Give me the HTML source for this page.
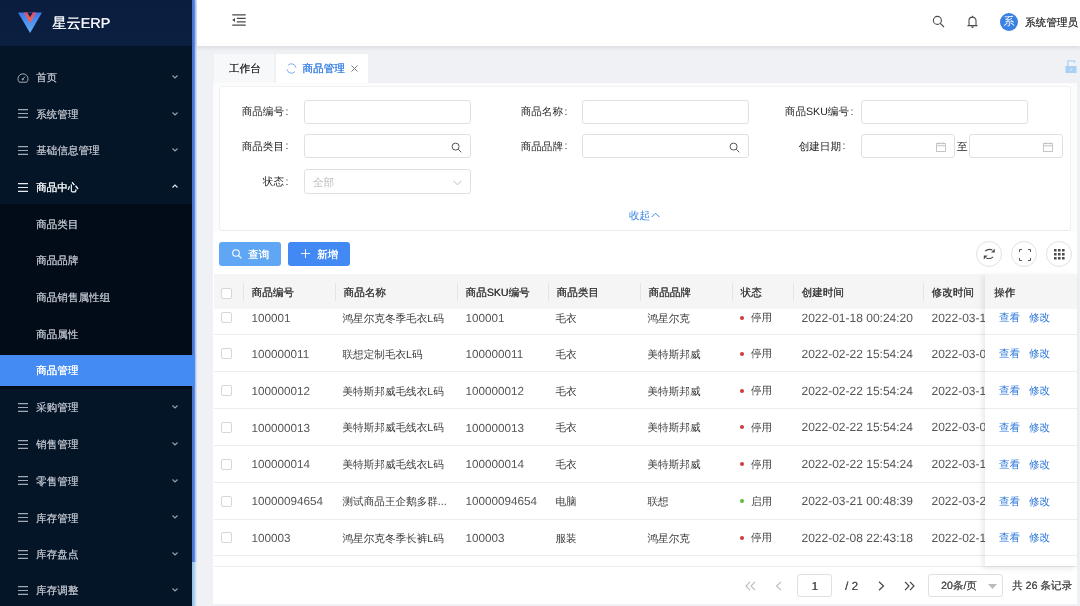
<!DOCTYPE html><html><head><meta charset="utf-8"><title>星云ERP</title><style>
*{box-sizing:border-box;margin:0;padding:0}
html,body{width:1080px;height:606px;overflow:hidden}
body{position:relative;background:#eff1f4;font-family:"Liberation Sans",sans-serif;font-size:10.6px;color:#333;text-rendering:geometricPrecision}
#root{position:absolute;left:0;top:0;width:1080px;height:606px;will-change:transform;overflow:hidden}
.a{position:absolute;white-space:nowrap}
#side{left:0;top:0;width:192px;height:606px;background:#051528;overflow:hidden}
#logo{left:0;top:0;width:192px;height:46px;background:linear-gradient(180deg,#0a1d3e,#0b1f41)}
.lt{left:52px;top:15.5px;font-size:14.3px;color:#f4f6fa;text-shadow:0.45px 0 0 #f4f6fa;line-height:16px}
.mt{left:36px;line-height:12px;color:#bcc1c9;text-shadow:0.15px 0 0 currentColor}
#sub{left:0;top:204px;width:192px;height:185px;background:#020c18}
#hl{left:0;top:355px;width:192px;height:31px;background:#448bf4}
#strip{left:192px;top:0;width:5px;height:562px;background:linear-gradient(90deg,#4274d3 0,#4a7cd9 45%,#a9b9ec 62%,#c3cbef 78%,#e8ebf3 100%)}
#hl2{left:192px;top:355px;width:2.5px;height:31px;background:#448bf4}
#strip2{left:192px;top:562px;width:5px;height:44px;background:linear-gradient(90deg,#8fbde6 0,#a9d0ee 45%,#dfe6ee 80%,#eceef2 100%)}
#hdr{left:197px;top:0;width:883px;height:46px;background:#fff;box-shadow:0 2px 4px rgba(0,0,0,.09)}
.hn{left:1025px;top:16.5px;line-height:12px;color:#3a3a3a;text-shadow:0.2px 0 0 #3a3a3a}
.tab1{left:214px;top:54px;width:60px;height:30px;background:#f7f8fa}
.tab2{left:276px;top:54px;width:92px;height:30px;background:#fff}
.tt{line-height:12px;text-shadow:0.1px 0 0 currentColor}
#outer{left:213px;top:83px;width:864px;height:148px;background:#fcfcfd}
#card{left:219px;top:86px;width:852px;height:145px;background:#fff;border:1px solid #f0f1f3;border-bottom-color:#ebebeb;border-radius:3px}
#tbw{left:213px;top:231px;width:864px;height:373px;background:#fff}
.lb{line-height:12px;color:#1f1f1f;text-align:right}
.inp{background:#fff;border:1px solid #e0e0e0;border-radius:3px;height:24.3px}
.btn{height:24px;border-radius:3px;color:#fff;line-height:12px}
.circ{width:26px;height:26px;border:1px solid #e2e2e2;border-radius:50%;background:#fff}
#thead{left:214px;top:274px;width:863px;height:35px;background:#f5f5f5}
.th{line-height:12px;color:#3a3a3a;text-shadow:0.3px 0 0 #3a3a3a;top:287px}
.sep{width:1px;height:18px;top:283px;background:#e4e4e4}
.rl{left:214px;width:863px;height:1px;background:#ececec}
.td{line-height:12px;color:#3c3c3c}
.num{font-size:11.7px;color:#555}
.dt{font-size:12px}
.cb{width:11px;height:11px;border:1px solid #d6d6d6;border-radius:2px;background:#fff}
.lnk{color:#2f78da;line-height:12px}
#fixed{left:985px;top:274px;width:92px;height:292px;background:#fff;box-shadow:-2px 2px 6px rgba(0,0,0,.10)}
.pg{line-height:12px;color:#505050;text-shadow:0.2px 0 0 #505050}
</style></head><body><div id="root"><div id="side" class="a"><div id="logo" class="a"><svg class="a" style="left:17.7px;top:12px" width="24" height="22" viewBox="0 0 24 22"><defs><linearGradient id="vg" x1="0" y1="0" x2="0" y2="1"><stop offset="0" stop-color="#3f76e6"/><stop offset="1" stop-color="#62b2f7"/></linearGradient><linearGradient id="rg" x1="0" y1="0" x2="0" y2="1"><stop offset="0" stop-color="#e0506a"/><stop offset="1" stop-color="#ef6a4e"/></linearGradient></defs><polygon points="0,0.5 24,0.5 12.1,21" fill="url(#vg)"/><polygon points="5.8,0.5 18.2,0.5 12.1,11" fill="url(#rg)"/><polygon points="9.3,0.5 14.8,0.5 12.1,5.3" fill="#0b1d42"/></svg><div class="a lt">星云ERP</div></div><div id="sub" class="a"></div><div id="hl" class="a"></div><div class="a mt" style="top:72.0px;color:#b7bcc5">首页</div><svg class="a" style="left:17px;top:71.5px" width="12" height="11" viewBox="0 0 12 11" fill="none" stroke="#a4aab3" stroke-width="1"><path d="M2.3 10.2A5 5 0 1 1 9.7 10.2Z"/><path d="M5.8 7.2L8 4.6"/><circle cx="5.7" cy="7.3" r="0.6" fill="#a4aab3"/></svg><svg class="a" style="left:171.5px;top:74.8px" width="6" height="4" viewBox="0 0 6 4" fill="none" stroke="#9aa0aa" stroke-width="1.1"><path d="M0.5 0.5L3 3L5.5 0.5"/></svg><div class="a mt" style="top:108.7px;color:#b7bcc5">系统管理</div><svg class="a" style="left:18px;top:109.2px" width="10" height="9" viewBox="0 0 10 9" stroke="#a4aab3" stroke-width="1.15"><path d="M0 0.6H10M0 4.5H10M0 8.4H10"/></svg><svg class="a" style="left:171.5px;top:111.5px" width="6" height="4" viewBox="0 0 6 4" fill="none" stroke="#9aa0aa" stroke-width="1.1"><path d="M0.5 0.5L3 3L5.5 0.5"/></svg><div class="a mt" style="top:145.4px;color:#b7bcc5">基础信息管理</div><svg class="a" style="left:18px;top:145.9px" width="10" height="9" viewBox="0 0 10 9" stroke="#a4aab3" stroke-width="1.15"><path d="M0 0.6H10M0 4.5H10M0 8.4H10"/></svg><svg class="a" style="left:171.5px;top:148.2px" width="6" height="4" viewBox="0 0 6 4" fill="none" stroke="#9aa0aa" stroke-width="1.1"><path d="M0.5 0.5L3 3L5.5 0.5"/></svg><div class="a mt" style="top:182.2px;color:#f2f4f7">商品中心</div><svg class="a" style="left:18px;top:182.7px" width="10" height="9" viewBox="0 0 10 9" stroke="#e8ebf0" stroke-width="1.15"><path d="M0 0.6H10M0 4.5H10M0 8.4H10"/></svg><svg class="a" style="left:171.5px;top:184.2px" width="6" height="4" viewBox="0 0 6 4" fill="none" stroke="#e8ebf0" stroke-width="1.1"><path d="M0.5 3.5L3 1L5.5 3.5"/></svg><div class="a mt" style="top:402.4px;color:#b7bcc5">采购管理</div><svg class="a" style="left:18px;top:402.9px" width="10" height="9" viewBox="0 0 10 9" stroke="#a4aab3" stroke-width="1.15"><path d="M0 0.6H10M0 4.5H10M0 8.4H10"/></svg><svg class="a" style="left:171.5px;top:405.2px" width="6" height="4" viewBox="0 0 6 4" fill="none" stroke="#9aa0aa" stroke-width="1.1"><path d="M0.5 0.5L3 3L5.5 0.5"/></svg><div class="a mt" style="top:439.2px;color:#b7bcc5">销售管理</div><svg class="a" style="left:18px;top:439.7px" width="10" height="9" viewBox="0 0 10 9" stroke="#a4aab3" stroke-width="1.15"><path d="M0 0.6H10M0 4.5H10M0 8.4H10"/></svg><svg class="a" style="left:171.5px;top:442.0px" width="6" height="4" viewBox="0 0 6 4" fill="none" stroke="#9aa0aa" stroke-width="1.1"><path d="M0.5 0.5L3 3L5.5 0.5"/></svg><div class="a mt" style="top:475.9px;color:#b7bcc5">零售管理</div><svg class="a" style="left:18px;top:476.4px" width="10" height="9" viewBox="0 0 10 9" stroke="#a4aab3" stroke-width="1.15"><path d="M0 0.6H10M0 4.5H10M0 8.4H10"/></svg><svg class="a" style="left:171.5px;top:478.7px" width="6" height="4" viewBox="0 0 6 4" fill="none" stroke="#9aa0aa" stroke-width="1.1"><path d="M0.5 0.5L3 3L5.5 0.5"/></svg><div class="a mt" style="top:512.6px;color:#b7bcc5">库存管理</div><svg class="a" style="left:18px;top:513.1px" width="10" height="9" viewBox="0 0 10 9" stroke="#a4aab3" stroke-width="1.15"><path d="M0 0.6H10M0 4.5H10M0 8.4H10"/></svg><svg class="a" style="left:171.5px;top:515.4px" width="6" height="4" viewBox="0 0 6 4" fill="none" stroke="#9aa0aa" stroke-width="1.1"><path d="M0.5 0.5L3 3L5.5 0.5"/></svg><div class="a mt" style="top:549.3px;color:#b7bcc5">库存盘点</div><svg class="a" style="left:18px;top:549.8px" width="10" height="9" viewBox="0 0 10 9" stroke="#a4aab3" stroke-width="1.15"><path d="M0 0.6H10M0 4.5H10M0 8.4H10"/></svg><svg class="a" style="left:171.5px;top:552.1px" width="6" height="4" viewBox="0 0 6 4" fill="none" stroke="#9aa0aa" stroke-width="1.1"><path d="M0.5 0.5L3 3L5.5 0.5"/></svg><div class="a mt" style="top:585.3px;color:#b7bcc5">库存调整</div><svg class="a" style="left:18px;top:585.8px" width="10" height="9" viewBox="0 0 10 9" stroke="#a4aab3" stroke-width="1.15"><path d="M0 0.6H10M0 4.5H10M0 8.4H10"/></svg><svg class="a" style="left:171.5px;top:588.1px" width="6" height="4" viewBox="0 0 6 4" fill="none" stroke="#9aa0aa" stroke-width="1.1"><path d="M0.5 0.5L3 3L5.5 0.5"/></svg><div class="a mt" style="top:218.5px;color:#b7bcc5">商品类目</div><div class="a mt" style="top:255.2px;color:#b7bcc5">商品品牌</div><div class="a mt" style="top:291.9px;color:#b7bcc5">商品销售属性组</div><div class="a mt" style="top:328.6px;color:#b7bcc5">商品属性</div><div class="a mt" style="top:365.3px;color:#ffffff">商品管理</div></div><div id="strip" class="a"></div><div id="strip2" class="a"></div><div id="hl2" class="a"></div><div id="hdr" class="a"></div><svg class="a" style="left:232px;top:14px" width="14" height="12" viewBox="0 0 14 12" stroke="#4a4a4a" stroke-width="1.3"><path d="M0.3 0.8H13.7M4.8 4.4H13.7M4.8 7.8H13.7M0.3 11.2H13.7"/><path d="M0.2 6.1L3 4.1V8.1Z" fill="#4a4a4a" stroke="none"/></svg><svg class="a" style="left:932px;top:15px" width="13" height="13" viewBox="0 0 13 13" fill="none" stroke="#4a4a4a" stroke-width="1.1"><circle cx="5.4" cy="5.4" r="4"/><path d="M8.3 8.3L12 12"/></svg><svg class="a" style="left:967px;top:15px" width="11" height="13" viewBox="0 0 11 13" fill="none" stroke="#4a4a4a" stroke-width="1.1"><path d="M2 10.6V5.6A3.5 3.5 0 0 1 9 5.6V10.6M0.5 10.6H10.5"/><path d="M5.5 2.1V0.8M4.4 11.6L5.5 12.5L6.6 11.6"/></svg><div class="a" style="left:1000px;top:13px;width:18px;height:18px;border-radius:50%;background:#3b80e3;color:#fff;font-size:11px;line-height:18px;text-align:center">系</div><div class="a hn">系统管理员</div><div class="a tab1"></div><div class="a tab2"></div><div class="a tt" style="left:229px;top:63px;color:#2e2e2e">工作台</div><svg class="a" style="left:285.5px;top:62.5px" width="11" height="11" viewBox="0 0 11 11" fill="none" stroke="#78ace8" stroke-width="1"><path d="M9.9 4.6A4.5 4.5 0 0 0 2.1 2.3M1.1 6.4A4.5 4.5 0 0 0 8.9 8.7"/></svg><div class="a tt" style="left:302.5px;top:63px;color:#3a82e3">商品管理</div><svg class="a" style="left:350.5px;top:65px" width="7" height="7" viewBox="0 0 7 7" stroke="#777" stroke-width="1"><path d="M0.5 0.5L6.5 6.5M6.5 0.5L0.5 6.5"/></svg><svg class="a" style="left:1065px;top:60px" width="12" height="13" viewBox="0 0 12 13"><path d="M2.8 6.2V1.4Q2.8 0.9 3.4 0.9H9Q9.6 0.9 9.6 1.5V3" fill="none" stroke="#a9d1f5" stroke-width="1.2"/><rect x="0.5" y="6" width="11" height="7" fill="#a9d1f5"/><rect x="5.3" y="8.6" width="1.4" height="2.2" fill="#d4e8fa"/></svg><div id="outer" class="a"></div><div id="tbw" class="a"></div><div id="card" class="a"></div><div class="a lb" style="left:164px;width:120px;top:106px">商品编号</div><div class="a lb" style="left:285.5px;top:105.5px">:</div><div class="a inp" style="left:304px;top:99.5px;width:167px"></div><div class="a lb" style="left:443px;width:120px;top:106px">商品名称</div><div class="a lb" style="left:564.5px;top:105.5px">:</div><div class="a inp" style="left:582px;top:99.5px;width:167px"></div><div class="a lb" style="left:729px;width:120px;top:106px">商品SKU编号</div><div class="a lb" style="left:850.5px;top:105.5px">:</div><div class="a inp" style="left:861px;top:99.5px;width:167px"></div><div class="a lb" style="left:164px;width:120px;top:140.5px">商品类目</div><div class="a lb" style="left:285.5px;top:140.0px">:</div><div class="a inp" style="left:304px;top:134.2px;width:167px"></div><svg class="a" style="left:451px;top:141.5px" width="11" height="11" viewBox="0 0 11 11" fill="none" stroke="#555" stroke-width="1"><circle cx="4.6" cy="4.6" r="3.5"/><path d="M7.3 7.3L10.3 10.3"/></svg><div class="a lb" style="left:443px;width:120px;top:140.5px">商品品牌</div><div class="a lb" style="left:564.5px;top:140.0px">:</div><div class="a inp" style="left:582px;top:134.2px;width:167px"></div><svg class="a" style="left:729px;top:141.5px" width="11" height="11" viewBox="0 0 11 11" fill="none" stroke="#555" stroke-width="1"><circle cx="4.6" cy="4.6" r="3.5"/><path d="M7.3 7.3L10.3 10.3"/></svg><div class="a lb" style="left:721px;width:120px;top:140.5px">创建日期</div><div class="a lb" style="left:842.5px;top:140.0px">:</div><div class="a inp" style="left:861px;top:134.2px;width:94px"></div><svg class="a" style="left:936px;top:141.5px" width="10" height="10" viewBox="0 0 10 10" fill="none" stroke="#c0c0c0" stroke-width="0.9"><rect x="0.5" y="1.5" width="9" height="8"/><path d="M0.5 3.8H9.5M3 0V2.5M7 0V2.5"/></svg><div class="a lb" style="left:957px;top:140.5px">至</div><div class="a inp" style="left:969px;top:134.2px;width:94px"></div><svg class="a" style="left:1043px;top:141.5px" width="10" height="10" viewBox="0 0 10 10" fill="none" stroke="#c0c0c0" stroke-width="0.9"><rect x="0.5" y="1.5" width="9" height="8"/><path d="M0.5 3.8H9.5M3 0V2.5M7 0V2.5"/></svg><div class="a lb" style="left:164px;width:120px;top:176px">状态</div><div class="a lb" style="left:285.5px;top:175.5px">:</div><div class="a inp" style="left:304px;top:169.3px;width:167px"></div><div class="a" style="left:313px;top:176.5px;line-height:12px;color:#bdbdbd">全部</div><svg class="a" style="left:453px;top:179.5px" width="9" height="6" viewBox="0 0 9 6" fill="none" stroke="#bbb" stroke-width="1"><path d="M0.5 0.8L4.5 4.8L8.5 0.8"/></svg><div class="a" style="left:629px;top:210px;line-height:12px;color:#3a84e6">收起</div><svg class="a" style="left:651px;top:212px" width="9" height="6" viewBox="0 0 9 6" fill="none" stroke="#3a84e6" stroke-width="1"><path d="M0.5 5.2L4.5 1.2L8.5 5.2"/></svg><div class="a btn" style="left:219px;top:242px;width:62px;background:#5fa6f4"></div><svg class="a" style="left:232px;top:248.5px" width="10" height="10" viewBox="0 0 10 10" fill="none" stroke="#fff" stroke-width="1.1"><circle cx="4" cy="4" r="3.3"/><path d="M6.4 6.4L9.4 9.4"/></svg><div class="a btn" style="left:248px;top:248.5px;text-shadow:0.2px 0 0 #fff">查询</div><div class="a btn" style="left:288px;top:242px;width:62px;background:#4389f3"></div><svg class="a" style="left:301px;top:249px" width="9" height="9" viewBox="0 0 9 9" stroke="#fff" stroke-width="0.9"><path d="M4.5 0V9M0 4.5H9"/></svg><div class="a btn" style="left:317px;top:248.5px;text-shadow:0.2px 0 0 #fff">新增</div><div class="a circ" style="left:976px;top:241px"></div><div class="a circ" style="left:1011px;top:241px"></div><div class="a circ" style="left:1046px;top:241px"></div><svg class="a" style="left:983px;top:248px" width="13" height="12" viewBox="0 0 13 12" fill="none" stroke="#4a4a4a" stroke-width="1.1"><path d="M2 3.2Q5.4 0.3 9.4 2"/><path d="M10.2 8.8Q6.8 11.6 3.2 9.9"/><path d="M11.8 0.8V4.6H8Z M0.8 11.4V7.6H4.6Z" fill="#4a4a4a" stroke="none"/></svg><svg class="a" style="left:1018.5px;top:248.5px" width="12" height="12" viewBox="0 0 12 12" fill="none" stroke="#555" stroke-width="1"><path d="M0.5 3V0.5H3M9 0.5H11.5V3M11.5 9V11.5H9M3 11.5H0.5V9"/></svg><svg class="a" style="left:1053.5px;top:249px" width="11" height="11" viewBox="0 0 11 11" fill="#4a4a4a"><rect x="0.0" y="0.0" width="2.6" height="2.6" rx="0.3"/><rect x="4.0" y="0.0" width="2.6" height="2.6" rx="0.3"/><rect x="8.0" y="0.0" width="2.6" height="2.6" rx="0.3"/><rect x="0.0" y="4.0" width="2.6" height="2.6" rx="0.3"/><rect x="4.0" y="4.0" width="2.6" height="2.6" rx="0.3"/><rect x="8.0" y="4.0" width="2.6" height="2.6" rx="0.3"/><rect x="0.0" y="8.0" width="2.6" height="2.6" rx="0.3"/><rect x="4.0" y="8.0" width="2.6" height="2.6" rx="0.3"/><rect x="8.0" y="8.0" width="2.6" height="2.6" rx="0.3"/></svg><div id="thead" class="a"></div><div class="a cb" style="left:221px;top:287.5px"></div><div class="a sep" style="left:243px"></div><div class="a th" style="left:251.5px">商品编号</div><div class="a sep" style="left:335px"></div><div class="a th" style="left:343.5px">商品名称</div><div class="a sep" style="left:457px"></div><div class="a th" style="left:465.5px">商品SKU编号</div><div class="a sep" style="left:548px"></div><div class="a th" style="left:556.5px">商品类目</div><div class="a sep" style="left:640px"></div><div class="a th" style="left:648.5px">商品品牌</div><div class="a sep" style="left:732px"></div><div class="a th" style="left:740.5px">状态</div><div class="a sep" style="left:793px"></div><div class="a th" style="left:801.5px">创建时间</div><div class="a sep" style="left:923px"></div><div class="a th" style="left:931.5px">修改时间</div><div class="a cb" style="left:221px;top:312.0px"></div><div class="a td num" style="left:251.5px;top:312.7px">100001</div><div class="a td" style="left:342.5px;top:312.5px">鸿星尔克冬季毛衣L码</div><div class="a td num" style="left:465.5px;top:312.7px">100001</div><div class="a td" style="left:555.5px;top:312.5px">毛衣</div><div class="a td" style="left:647.5px;top:312.5px">鸿星尔克</div><div class="a" style="left:740px;top:315.5px;width:4px;height:4px;border-radius:50%;background:#cf3a3a"></div><div class="a td" style="left:751px;top:312.0px">停用</div><div class="a td num dt" style="left:801.5px;top:311.5px">2022-01-18 00:24:20</div><div class="a td num dt" style="left:931.5px;top:311.5px">2022-03-1</div><div class="a cb" style="left:221px;top:348.3px"></div><div class="a td num" style="left:251.5px;top:349.0px">100000011</div><div class="a td" style="left:342.5px;top:348.8px">联想定制毛衣L码</div><div class="a td num" style="left:465.5px;top:349.0px">100000011</div><div class="a td" style="left:555.5px;top:348.8px">毛衣</div><div class="a td" style="left:647.5px;top:348.8px">美特斯邦威</div><div class="a" style="left:740px;top:351.8px;width:4px;height:4px;border-radius:50%;background:#cf3a3a"></div><div class="a td" style="left:751px;top:348.3px">停用</div><div class="a td num dt" style="left:801.5px;top:347.8px">2022-02-22 15:54:24</div><div class="a td num dt" style="left:931.5px;top:347.8px">2022-03-0</div><div class="a cb" style="left:221px;top:385.1px"></div><div class="a td num" style="left:251.5px;top:385.8px">100000012</div><div class="a td" style="left:342.5px;top:385.6px">美特斯邦威毛线衣L码</div><div class="a td num" style="left:465.5px;top:385.8px">100000012</div><div class="a td" style="left:555.5px;top:385.6px">毛衣</div><div class="a td" style="left:647.5px;top:385.6px">美特斯邦威</div><div class="a" style="left:740px;top:388.6px;width:4px;height:4px;border-radius:50%;background:#cf3a3a"></div><div class="a td" style="left:751px;top:385.1px">停用</div><div class="a td num dt" style="left:801.5px;top:384.6px">2022-02-22 15:54:24</div><div class="a td num dt" style="left:931.5px;top:384.6px">2022-03-1</div><div class="a cb" style="left:221px;top:421.9px"></div><div class="a td num" style="left:251.5px;top:422.6px">100000013</div><div class="a td" style="left:342.5px;top:422.4px">美特斯邦威毛线衣L码</div><div class="a td num" style="left:465.5px;top:422.6px">100000013</div><div class="a td" style="left:555.5px;top:422.4px">毛衣</div><div class="a td" style="left:647.5px;top:422.4px">美特斯邦威</div><div class="a" style="left:740px;top:425.4px;width:4px;height:4px;border-radius:50%;background:#cf3a3a"></div><div class="a td" style="left:751px;top:421.9px">停用</div><div class="a td num dt" style="left:801.5px;top:421.4px">2022-02-22 15:54:24</div><div class="a td num dt" style="left:931.5px;top:421.4px">2022-03-0</div><div class="a cb" style="left:221px;top:458.7px"></div><div class="a td num" style="left:251.5px;top:459.4px">100000014</div><div class="a td" style="left:342.5px;top:459.2px">美特斯邦威毛线衣L码</div><div class="a td num" style="left:465.5px;top:459.4px">100000014</div><div class="a td" style="left:555.5px;top:459.2px">毛衣</div><div class="a td" style="left:647.5px;top:459.2px">美特斯邦威</div><div class="a" style="left:740px;top:462.2px;width:4px;height:4px;border-radius:50%;background:#cf3a3a"></div><div class="a td" style="left:751px;top:458.7px">停用</div><div class="a td num dt" style="left:801.5px;top:458.2px">2022-02-22 15:54:24</div><div class="a td num dt" style="left:931.5px;top:458.2px">2022-03-1</div><div class="a cb" style="left:221px;top:495.5px"></div><div class="a td num" style="left:251.5px;top:496.2px">10000094654</div><div class="a td" style="left:342.5px;top:496.0px">测试商品王企鹅多群...</div><div class="a td num" style="left:465.5px;top:496.2px">10000094654</div><div class="a td" style="left:555.5px;top:496.0px">电脑</div><div class="a td" style="left:647.5px;top:496.0px">联想</div><div class="a" style="left:740px;top:499.0px;width:4px;height:4px;border-radius:50%;background:#5bbf3a"></div><div class="a td" style="left:751px;top:495.5px">启用</div><div class="a td num dt" style="left:801.5px;top:495.0px">2022-03-21 00:48:39</div><div class="a td num dt" style="left:931.5px;top:495.0px">2022-03-2</div><div class="a cb" style="left:221px;top:532.3px"></div><div class="a td num" style="left:251.5px;top:533.0px">100003</div><div class="a td" style="left:342.5px;top:532.8px">鸿星尔克冬季长裤L码</div><div class="a td num" style="left:465.5px;top:533.0px">100003</div><div class="a td" style="left:555.5px;top:532.8px">服装</div><div class="a td" style="left:647.5px;top:532.8px">鸿星尔克</div><div class="a" style="left:740px;top:535.8px;width:4px;height:4px;border-radius:50%;background:#cf3a3a"></div><div class="a td" style="left:751px;top:532.3px">停用</div><div class="a td num dt" style="left:801.5px;top:531.8px">2022-02-08 22:43:18</div><div class="a td num dt" style="left:931.5px;top:531.8px">2022-02-1</div><div class="a rl" style="top:334px"></div><div class="a rl" style="top:371px"></div><div class="a rl" style="top:408px"></div><div class="a rl" style="top:445px"></div><div class="a rl" style="top:481.5px"></div><div class="a rl" style="top:518.5px"></div><div class="a rl" style="top:555px"></div><div class="a rl" style="top:566px"></div><div id="fixed" class="a"></div><div class="a" style="left:985px;top:274px;width:92px;height:35px;background:#f5f5f5"></div><div class="a th" style="left:994px">操作</div><div class="a lnk" style="left:999px;top:312.0px">查看</div><div class="a lnk" style="left:1029px;top:312.0px">修改</div><div class="a lnk" style="left:999px;top:348.3px">查看</div><div class="a lnk" style="left:1029px;top:348.3px">修改</div><div class="a lnk" style="left:999px;top:385.1px">查看</div><div class="a lnk" style="left:1029px;top:385.1px">修改</div><div class="a lnk" style="left:999px;top:421.9px">查看</div><div class="a lnk" style="left:1029px;top:421.9px">修改</div><div class="a lnk" style="left:999px;top:458.7px">查看</div><div class="a lnk" style="left:1029px;top:458.7px">修改</div><div class="a lnk" style="left:999px;top:495.5px">查看</div><div class="a lnk" style="left:1029px;top:495.5px">修改</div><div class="a lnk" style="left:999px;top:532.3px">查看</div><div class="a lnk" style="left:1029px;top:532.3px">修改</div><div class="a" style="left:985px;top:334px;width:92px;height:1px;background:#ececec"></div><div class="a" style="left:985px;top:371px;width:92px;height:1px;background:#ececec"></div><div class="a" style="left:985px;top:408px;width:92px;height:1px;background:#ececec"></div><div class="a" style="left:985px;top:445px;width:92px;height:1px;background:#ececec"></div><div class="a" style="left:985px;top:481.5px;width:92px;height:1px;background:#ececec"></div><div class="a" style="left:985px;top:518.5px;width:92px;height:1px;background:#ececec"></div><div class="a" style="left:985px;top:555px;width:92px;height:1px;background:#ececec"></div><svg class="a" style="left:745px;top:580.5px" width="11" height="10" viewBox="0 0 11 10" fill="none" stroke="#bbb" stroke-width="1.1"><path d="M5 0.8L1 5L5 9.2M10 0.8L6 5L10 9.2"/></svg><svg class="a" style="left:775px;top:580.5px" width="7" height="10" viewBox="0 0 7 10" fill="none" stroke="#bbb" stroke-width="1.1"><path d="M6 0.8L1.5 5L6 9.2"/></svg><div class="a inp" style="left:797px;top:574px;width:35px;height:23px"></div><div class="a pg num" style="left:811.5px;top:581.0px">1</div><div class="a pg num" style="left:845px;top:581.0px">/ 2</div><svg class="a" style="left:878px;top:580.5px" width="7" height="10" viewBox="0 0 7 10" fill="none" stroke="#444" stroke-width="1.2"><path d="M1 0.8L5.5 5L1 9.2"/></svg><svg class="a" style="left:904px;top:580.5px" width="11" height="10" viewBox="0 0 11 10" fill="none" stroke="#444" stroke-width="1.2"><path d="M1 0.8L5 5L1 9.2M6 0.8L10 5L6 9.2"/></svg><div class="a inp" style="left:928px;top:574px;width:75px;height:23px"></div><div class="a pg" style="left:941px;top:579.5px">20条/页</div><svg class="a" style="left:988px;top:583.5px" width="9" height="5" viewBox="0 0 9 5" fill="#bbb"><path d="M0 0H9L4.5 5Z"/></svg><div class="a pg" style="left:1012px;top:579.5px">共 26 条记录</div></div></body></html>
